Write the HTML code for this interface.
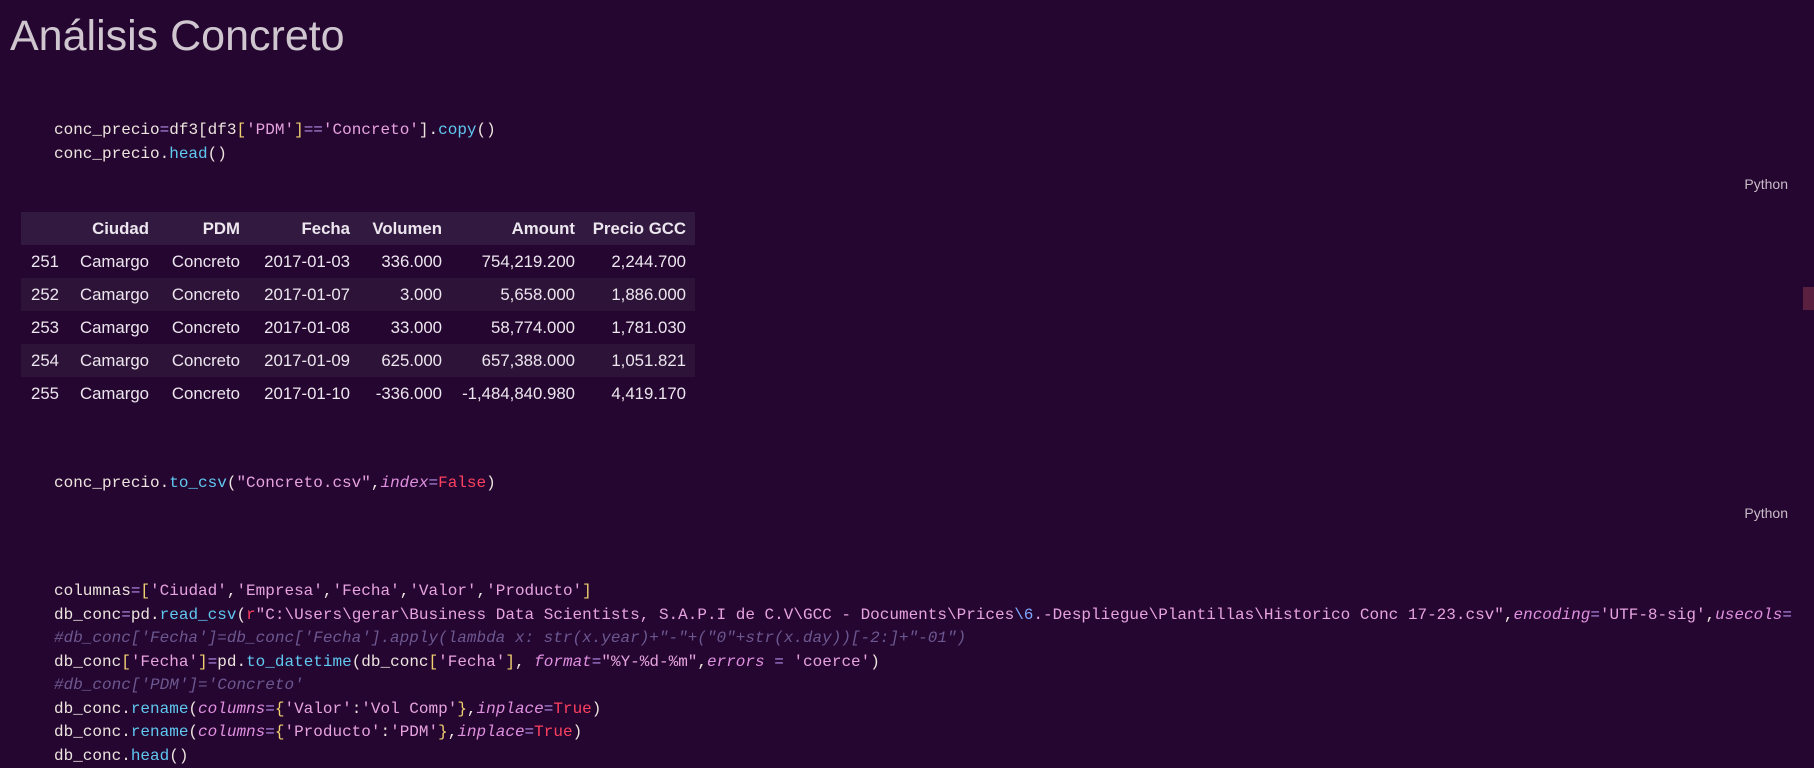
<!DOCTYPE html>
<html><head><meta charset="utf-8"><style>
body{margin:0;width:1814px;height:767px;background:#250630;overflow:hidden;position:relative;font-family:"Liberation Sans",sans-serif;}
.abs{position:absolute;}
h1{position:absolute;left:10px;top:10px;margin:0;font-weight:normal;font-size:43px;line-height:52px;color:#cfc6d0;white-space:nowrap;}
.code{position:absolute;left:54px;font-family:"Liberation Mono",monospace;font-size:16px;line-height:23.5px;color:#ece4de;white-space:pre;}
.s{color:#e7a3e0}.o{color:#b48ce8}.f{color:#5fc8f0}.y{color:#f0d070}.r{color:#ff4060}.k{color:#e090e0;font-style:italic}.c{color:#6c5890;font-style:italic}.b{color:#7fa8ff}
.py{position:absolute;right:26px;font-size:14px;color:#c8bcc8;}
table{position:absolute;left:21px;top:212px;border-collapse:collapse;font-size:16.8px;color:#ece6ee;table-layout:fixed;}
td,th{padding:0 9px 0 0;height:33px;text-align:right;white-space:nowrap;overflow:visible;}
th{font-weight:bold;background:#321940;}
tr.a td{background:#2e1339;}
td:first-child,th:first-child{text-align:left;padding-left:10px;}
</style></head><body>
<h1>Análisis Concreto</h1>
<div class="code" style="top:119px">conc_precio<span class="o">=</span>df3[df3<span class="y">[</span><span class="s">'PDM'</span><span class="y">]</span><span class="o">==</span><span class="s">'Concreto'</span>].<span class="f">copy</span>()
conc_precio.<span class="f">head</span>()</div>
<div class="py" style="top:176px">Python</div>
<table>
<colgroup><col style="width:48px"><col style="width:89px"><col style="width:91px"><col style="width:110px"><col style="width:92px"><col style="width:133px"><col style="width:111px"></colgroup>
<tr><th></th><th>Ciudad</th><th>PDM</th><th>Fecha</th><th>Volumen</th><th>Amount</th><th>Precio GCC</th></tr>
<tr><td>251</td><td>Camargo</td><td>Concreto</td><td>2017-01-03</td><td>336.000</td><td>754,219.200</td><td>2,244.700</td></tr>
<tr class="a"><td>252</td><td>Camargo</td><td>Concreto</td><td>2017-01-07</td><td>3.000</td><td>5,658.000</td><td>1,886.000</td></tr>
<tr><td>253</td><td>Camargo</td><td>Concreto</td><td>2017-01-08</td><td>33.000</td><td>58,774.000</td><td>1,781.030</td></tr>
<tr class="a"><td>254</td><td>Camargo</td><td>Concreto</td><td>2017-01-09</td><td>625.000</td><td>657,388.000</td><td>1,051.821</td></tr>
<tr><td>255</td><td>Camargo</td><td>Concreto</td><td>2017-01-10</td><td>-336.000</td><td>-1,484,840.980</td><td>4,419.170</td></tr>
</table>
<div class="abs" style="left:1803px;top:287px;width:11px;height:23px;background:#5a2040"></div>
<div class="code" style="top:472px">conc_precio.<span class="f">to_csv</span>(<span class="s">"Concreto.csv"</span>,<span class="k">index</span><span class="o">=</span><span class="r">False</span>)</div>
<div class="py" style="top:505px">Python</div>
<div class="code" style="top:580px">columnas<span class="o">=</span><span class="y">[</span><span class="s">'Ciudad'</span>,<span class="s">'Empresa'</span>,<span class="s">'Fecha'</span>,<span class="s">'Valor'</span>,<span class="s">'Producto'</span><span class="y">]</span>
db_conc<span class="o">=</span>pd.<span class="f">read_csv</span>(<span class="r">r</span><span class="s">"C:\Users\gerar\Business Data Scientists, S.A.P.I de C.V\GCC - Documents\Prices<span class="b">\6</span>.-Despliegue\Plantillas\Historico Conc 17-23.csv"</span>,<span class="k">encoding</span><span class="o">=</span><span class="s">'UTF-8-sig'</span>,<span class="k">usecols</span><span class="o">=</span>
<span class="c">#db_conc['Fecha']=db_conc['Fecha'].apply(lambda x: str(x.year)+"-"+("0"+str(x.day))[-2:]+"-01")</span>
db_conc<span class="y">[</span><span class="s">'Fecha'</span><span class="y">]</span><span class="o">=</span>pd.<span class="f">to_datetime</span>(db_conc<span class="y">[</span><span class="s">'Fecha'</span><span class="y">]</span>, <span class="k">format</span><span class="o">=</span><span class="s">"%Y-%d-%m"</span>,<span class="k">errors</span> <span class="o">=</span> <span class="s">'coerce'</span>)
<span class="c">#db_conc['PDM']='Concreto'</span>
db_conc.<span class="f">rename</span>(<span class="k">columns</span><span class="o">=</span><span class="y">{</span><span class="s">'Valor'</span>:<span class="s">'Vol Comp'</span><span class="y">}</span>,<span class="k">inplace</span><span class="o">=</span><span class="r">True</span>)
db_conc.<span class="f">rename</span>(<span class="k">columns</span><span class="o">=</span><span class="y">{</span><span class="s">'Producto'</span>:<span class="s">'PDM'</span><span class="y">}</span>,<span class="k">inplace</span><span class="o">=</span><span class="r">True</span>)
db_conc.<span class="f">head</span>()</div>
</body></html>
